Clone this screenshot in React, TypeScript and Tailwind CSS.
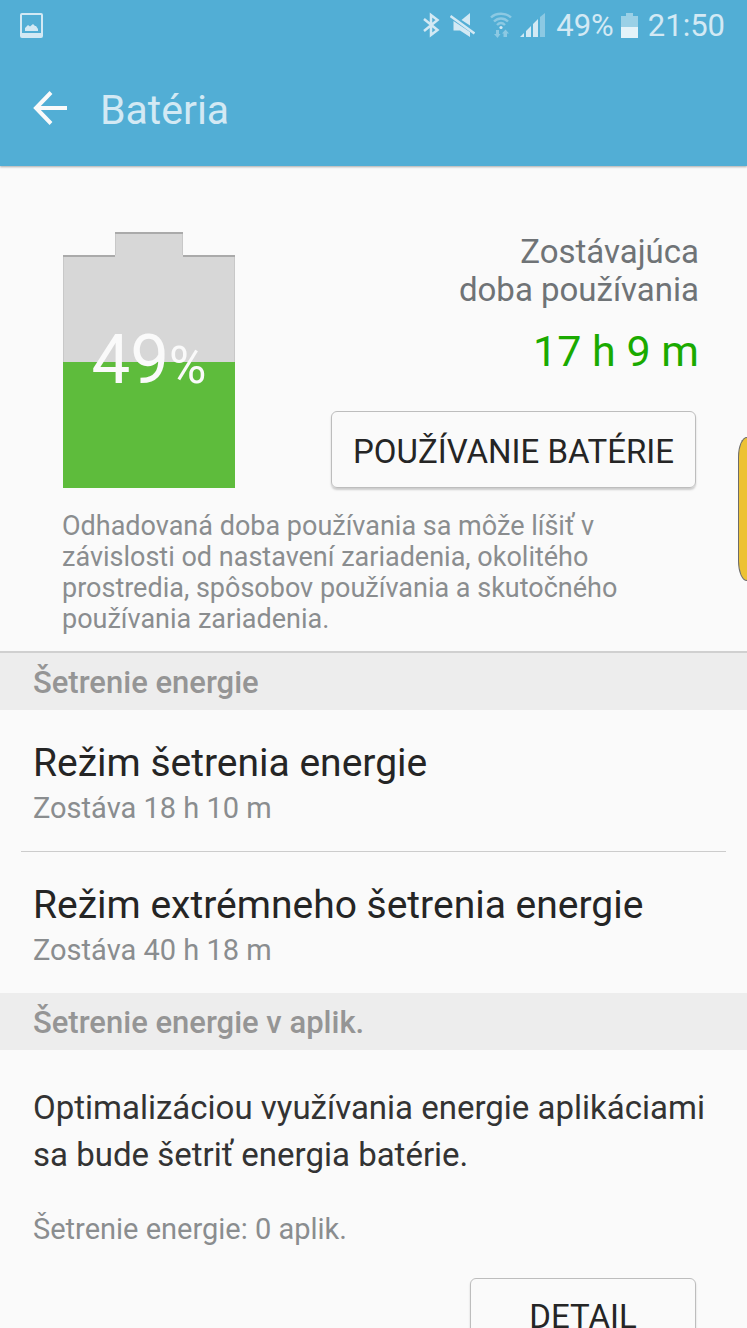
import type { ReactNode } from "react";

function StatusBar() {
  return (
    <div className="flex items-center justify-between h-[50px] pl-5 pr-[22px] text-[#d3e9f4]">
      <svg width="23" height="25" viewBox="0 0 23 25" fill="currentColor" aria-hidden="true">
        <path
          fillRule="evenodd"
          d="M2 0H21Q23 0 23 2V23Q23 25 21 25H2Q0 25 0 23V2Q0 0 2 0ZM2 2V20H21V2Z"
        />
        <path d="M5 18V15L8 12L10 13.5L13 11L15 13L16 13L18 16V18Z" />
      </svg>

      <div className="flex items-center">
        <svg width="17" height="26" viewBox="0 0 17 26" fill="none" stroke="currentColor" strokeWidth="2.500" aria-hidden="true">
          <path d="M1 7L14.500 18L8 23V3L14.500 8L1 19" />
        </svg>
        <svg className="ml-[10px]" width="25" height="24" viewBox="0 0 25 24" fill="currentColor" aria-hidden="true">
          <path d="M20 0V12.500L11.500 7Z" />
          <path d="M3.500 8L20 19V24L10 17.500H3.500Z" />
          <path d="M.5 3L24.500 20.500" stroke="currentColor" strokeWidth="2.500" />
        </svg>
        <svg className="ml-[15px]" width="22" height="26" viewBox="0 0 22 26" fill="none" aria-hidden="true">
          <g stroke="#8cc9e3" strokeWidth="2.400">
            <path d="M1 5.500C6 .5 16 .5 21 5.500" />
            <path d="M4 9.500C8 5.500 14 5.500 18 9.500" />
            <path d="M7 13C9.500 10.500 12.500 10.500 15 13" />
          </g>
          <circle cx="11" cy="15.500" r="1.600" fill="currentColor" />
          <path
            fill="#8cc9e3"
            d="M6 18H9V22H10.500L7.500 26L4 22H6ZM13.500 25V21.500H12L15.500 17.500L19 21.500H17V25Z"
          />
        </svg>
        <svg className="ml-2" width="25" height="24" viewBox="0 0 25 24" aria-hidden="true">
          <path fill="#8cc9e3" d="M20 4L25 0V24H20Z" />
          <path fill="currentColor" d="M0 24L4 20V24ZM6 18L11 13V24H6ZM13 11L18 6V24H13Z" />
        </svg>
        <span className="ml-[11px] text-[31px] leading-none">49%</span>
        <svg className="ml-[7px]" width="17" height="25" viewBox="0 0 17 25" aria-hidden="true">
          <path fill="#9ad0e6" d="M5 0H12V3H17V14H0V3H5Z" />
          <path fill="#e4f3f9" d="M0 14H17V25H0Z" />
        </svg>
        <span className="ml-[10px] text-[31px] leading-none">21:50</span>
      </div>
    </div>
  );
}

function BatteryLevel() {
  return (
    <div className="relative w-[172px] shrink-0">
      <svg className="block w-full" viewBox="0 0 172 256" aria-hidden="true">
        <path fill="#d7d7d7" d="M0 23H52V0H120V23H172V256H0Z" />
        <path fill="#aaaaaa" d="M0 23H52V25H0ZM52 0H120V2H52ZM120 23H172V25H120Z" />
        <path fill="none" stroke="#c8c8c8" d="M.5 25V130M52.500 2V23M119.500 2V23M171.500 25V130" />
        <path fill="#5ebc3c" d="M0 130H172V256H0Z" />
      </svg>
      <div className="absolute inset-x-0 top-[88px] text-center text-[#fafafa] text-[69px] leading-[80px]">
        49<span className="text-[51px]">%</span>
      </div>
    </div>
  );
}

function SectionTitle({ children }: { children: ReactNode }) {
  return (
    <h2 className="h-[57px] px-[33px] bg-[#ededed] text-[#959595] text-[31px] leading-[60px] font-medium">
      {children}
    </h2>
  );
}

function ModeItem({ title, remaining }: { title: string; remaining: string }) {
  return (
    <button className="block w-full h-[141px] px-[33px] pt-[6px] text-left">
      <span className="block text-[#252525] text-[39px] leading-[48px]">{title}</span>
      <span className="block text-[#8a8d8f] text-[29px] leading-[42px]">{remaining}</span>
    </button>
  );
}

function App() {
  return (
    <div className="min-h-screen bg-[#fafafa] font-[Roboto,sans-serif] overflow-x-hidden">
      <header className="h-[166px] bg-[#52aed5] shadow-[0_1px_2px_#aaaaaa]">
        <StatusBar />
        <div className="flex items-center h-[116px] pl-[33px]">
          <button aria-label="Späť">
            <svg width="34" height="34" viewBox="0 0 34 34" fill="none" stroke="#fafafa" strokeWidth="4" aria-hidden="true">
              <path d="M18 1.500L3 17L18 32.500M3 17H34" />
            </svg>
          </button>
          <h1 className="ml-[33px] pt-1 text-[#d3e9f4] text-[41px] leading-none">Batéria</h1>
        </div>
      </header>

      <main>
        <section className="relative pt-[66px] pb-4 border-b-2 border-[#d0d0d0]">
          <div className="flex justify-between pl-[63px] pr-12">
            <BatteryLevel />
            <div className="flex flex-col items-end text-right">
              <p className="pt-px text-[#6f7376] text-[33px] leading-[38px]">
                Zostávajúca
                <br />
                doba používania
              </p>
              <p className="mt-4 text-[#1aaa00] text-[43px] leading-[52px]">17 h 9 m</p>
              <button className="mt-auto mr-[3px] h-[77px] px-[21px] pt-1 border border-[#bdbdbd] rounded-md shadow-[0_2px_2px_#cccccc] text-[#252525] text-[33px]">
                POUŽÍVANIE BATÉRIE
              </button>
            </div>
          </div>
          <p className="mt-[23px] ml-[62px] max-w-[580px] text-[#8a8d8f] text-[27px] leading-[31px]">
            Odhadovaná doba používania sa môže líšiť v závislosti od nastavení zariadenia, okolitého
            prostredia, spôsobov používania a skutočného používania zariadenia.
          </p>
          <div className="absolute right-0 top-[271px] w-[9px] h-[144px] border border-r-0 border-[#6b6b6b] rounded-l-[9px_20px] bg-[#edc234]" />
        </section>

        <SectionTitle>Šetrenie energie</SectionTitle>
        <ModeItem title="Režim šetrenia energie" remaining="Zostáva 18 h 10 m" />
        <hr className="mx-[21px] border-[#cccccc]" />
        <ModeItem title="Režim extrémneho šetrenia energie" remaining="Zostáva 40 h 18 m" />

        <SectionTitle>Šetrenie energie v aplik.</SectionTitle>
        <section className="pl-[33px] pr-8 pt-[34px]">
          <p className="text-[#333333] text-[33px] leading-[47px]">
            Optimalizáciou využívania energie aplikáciami sa bude šetriť energia batérie.
          </p>
          <p className="mt-[30px] text-[#8a8d8f] text-[29px] leading-[42px]">Šetrenie energie: 0 aplik.</p>
          <div className="flex justify-end pt-7 pr-[19px]">
            <button className="h-[77px] w-[226px] border border-[#bdbdbd] rounded-md shadow-[0_2px_2px_#cccccc] text-[#252525] text-[33px]">
              DETAIL
            </button>
          </div>
        </section>
      </main>
    </div>
  );
}

export default App;
